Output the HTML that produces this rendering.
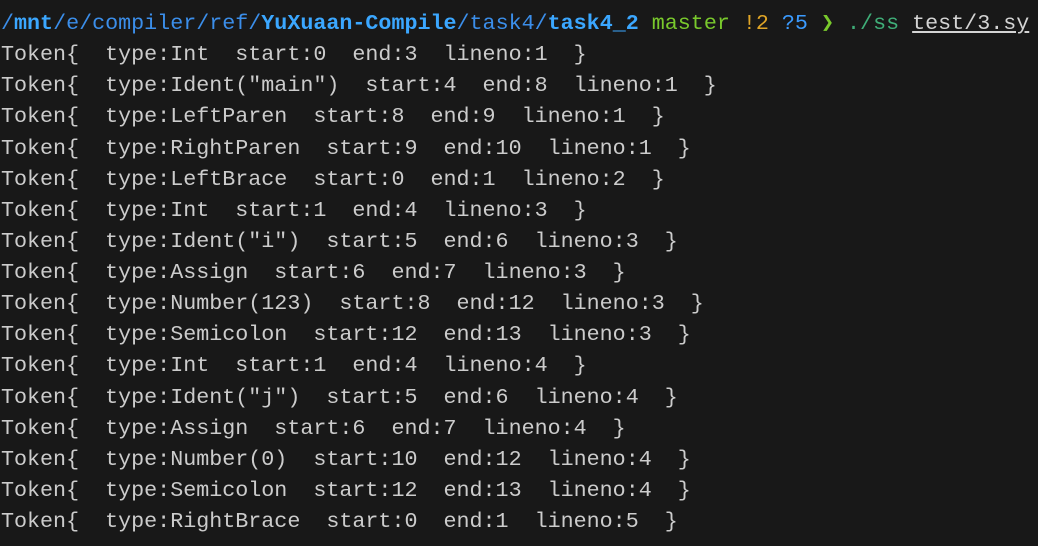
<!DOCTYPE html>
<html><head><style>
html,body{margin:0;padding:0;background:#181818;width:1038px;height:546px;overflow:hidden}
pre{margin:0;padding:8px 0 0 1px;font-family:"Liberation Mono",monospace;font-size:21.7px;line-height:31.12px;color:#cccccc;white-space:pre}
.b{color:#3b8eea}.bb{color:#3ba7ff;font-weight:bold}.g{color:#79c92c}.y{color:#e0a526}.q{color:#3b9bff}.gs{color:#3fae78}.u{text-decoration:underline;color:#d4d4d4}
</style></head><body><pre><span class="b">/</span><span class="bb">mnt</span><span class="b">/e/compiler/ref/</span><span class="bb">YuXuaan-Compile</span><span class="b">/task4/</span><span class="bb">task4_2</span> <span class="g">master</span> <span class="y">!2</span> <span class="q">?5</span> <span class="g" style="font-weight:bold">❯</span> <span class="gs">./ss</span> <span class="u">test/3.sy</span>
Token{  type:Int  start:0  end:3  lineno:1  }
Token{  type:Ident("main")  start:4  end:8  lineno:1  }
Token{  type:LeftParen  start:8  end:9  lineno:1  }
Token{  type:RightParen  start:9  end:10  lineno:1  }
Token{  type:LeftBrace  start:0  end:1  lineno:2  }
Token{  type:Int  start:1  end:4  lineno:3  }
Token{  type:Ident("i")  start:5  end:6  lineno:3  }
Token{  type:Assign  start:6  end:7  lineno:3  }
Token{  type:Number(123)  start:8  end:12  lineno:3  }
Token{  type:Semicolon  start:12  end:13  lineno:3  }
Token{  type:Int  start:1  end:4  lineno:4  }
Token{  type:Ident("j")  start:5  end:6  lineno:4  }
Token{  type:Assign  start:6  end:7  lineno:4  }
Token{  type:Number(0)  start:10  end:12  lineno:4  }
Token{  type:Semicolon  start:12  end:13  lineno:4  }
Token{  type:RightBrace  start:0  end:1  lineno:5  }</pre></body></html>
